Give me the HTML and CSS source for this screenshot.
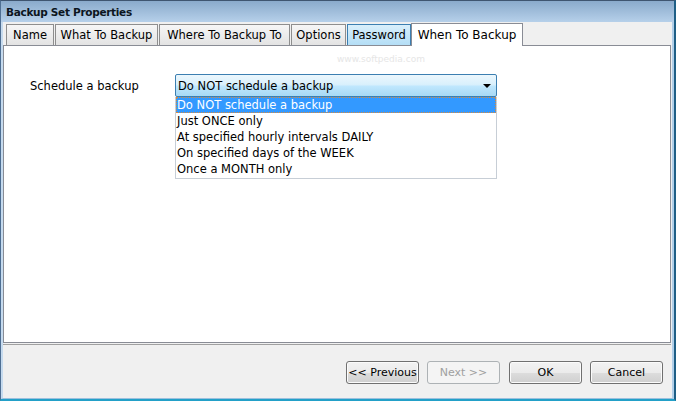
FILE: index.html
```html
<!DOCTYPE html>
<html>
<head>
<meta charset="utf-8">
<link rel="stylesheet" href="styles.css">
</head>
<body>
<div class="window">
  <div class="titlebar">Backup Set Properties</div>
  <div class="frame">
    <div class="tabs">
      <div class="tab t-name">Name</div>
      <div class="tab t-what">What To Backup</div>
      <div class="tab t-where">Where To Backup To</div>
      <div class="tab t-options">Options</div>
      <div class="tab t-pass hover">Password</div>
      <div class="tab t-when active">When To Backup</div>
    </div>
    <div class="panel">
      <div class="watermark">www.softpedia.com</div>
      <div class="row">
        <div class="label">Schedule a backup</div>
        <div class="combo-wrap">
          <div class="combo">
            <span>Do NOT schedule a backup</span>
            <span class="arrow"></span>
          </div>
          <ul class="list">
            <li class="selected">Do NOT schedule a backup</li>
            <li>Just ONCE only</li>
            <li>At specified hourly intervals DAILY</li>
            <li>On specified days of the WEEK</li>
            <li>Once a MONTH only</li>
          </ul>
        </div>
      </div>
    </div>
    <div class="footer">
      <button class="btn">&lt;&lt; Previous</button>
      <button class="btn disabled">Next &gt;&gt;</button>
      <button class="btn ok">OK</button>
      <button class="btn">Cancel</button>
    </div>
  </div>
</div>
</body>
</html>
```

FILE: styles.css
```css
html, body {
  margin: 0;
  padding: 0;
  width: 676px;
  height: 401px;
  overflow: hidden;
  font-family: "DejaVu Sans", sans-serif;
  font-size: 11px;
  color: #000;
}

.window {
  width: 676px;
  height: 401px;
  box-sizing: border-box;
  display: flex;
  flex-direction: column;
  background: #f0f0f0;
  border-left: 1px solid #4f6f93;
  border-right: 2px solid #1f5f86;
  border-bottom: 2px solid #23a0c8;
  border-top: 1px solid #3f5570;
}

.titlebar {
  height: 21px;
  line-height: 22px;
  padding-left: 5px;
  font-weight: bold;
  font-size: 10.5px;
  letter-spacing: -0.3px;
  background: linear-gradient(#8aaacb, #b6d0ea);
  color: #0c1520;
}

.frame {
  flex: 1;
  display: flex;
  flex-direction: column;
  border-left: 2px solid #c6dbef;
  border-right: 2px solid #b2cfe8;
  border-bottom: 1px solid #9cc0de;
  background: #f0f0f0;
}

.tabs {
  display: flex;
  align-items: flex-end;
  height: 23px;
  padding-left: 3px;
  gap: 1px;
}

.tab {
  height: 21px;
  line-height: 21px;
  box-sizing: border-box;
  text-align: center;
  border: 1px solid #8e8e8e;
  border-bottom: none;
  background: linear-gradient(#f6f6f6, #e3e3e3);
  font-size: 11.5px;
  color: #000;
}

.t-name { width: 48px; }
.t-what { width: 103px; }
.t-where { width: 131px; }
.t-options { width: 55px; }
.t-pass { width: 64px; }
.t-when { width: 112px; }

.tab.hover {
  background: linear-gradient(#d9effb, #b4def6);
  border-color: #3c7fb1;
}

.tab.active {
  height: 23px;
  line-height: 22px;
  background: #fff;
  border-color: #898c95;
  margin-left: -1px;
  margin-bottom: -1px;
  position: relative;
  z-index: 1;
  font-size: 12px;
}

.panel {
  flex: 1;
  background: #fff;
  border: 1px solid #898c95;
  margin-right: 1px;
  position: relative;
  box-shadow: 0 1px 0 #f0f0f0, 0 2px 0 #a0a0a0;
  margin-bottom: 3px;
}

.watermark {
  position: absolute;
  left: 333px;
  top: 8px;
  color: #e6e6e6;
  font-size: 9px;
}

.row {
  display: flex;
  padding: 28px 0 0 26px;
}

.label {
  width: 145px;
  padding-top: 5px;
  font-size: 11.5px;
}

.combo-wrap {
  width: 322px;
}

.combo {
  height: 23px;
  box-sizing: border-box;
  border: 1px solid #3c7fb1;
  border-radius: 2px;
  background: linear-gradient(#ecf7fd 0%, #d9f0fc 45%, #bee6fd 55%, #a7d9f5 100%);
  display: flex;
  align-items: center;
  justify-content: space-between;
  padding: 0 5px 0 2px;
  font-size: 11.5px;
}

.arrow {
  width: 0;
  height: 0;
  border-left: 4px solid transparent;
  border-right: 4px solid transparent;
  border-top: 4px solid #000;
  margin-top: 1px;
}

.list {
  list-style: none;
  margin: 0;
  padding: 0 0 1px 0;
  border: 1px solid #c7ced6;
  border-top: none;
  background: #fff;
  font-size: 11.5px;
}

.list li {
  height: 16px;
  line-height: 16px;
  padding-left: 1px;
  box-sizing: border-box;
}

.list li.selected {
  background: #3399ff;
  color: #fff;
  border: 1px dotted #d98a3c;
  line-height: 14px;
  padding-left: 0;
}

.footer {
  height: 52px;
  display: flex;
  justify-content: flex-end;
  align-items: flex-start;
  padding: 15px 9px 0 0;
  box-sizing: border-box;
}

.btn {
  width: 73px;
  height: 23px;
  font-family: "DejaVu Sans", sans-serif;
  font-size: 11px;
  border: 1px solid #707070;
  border-radius: 3px;
  background: linear-gradient(#f2f2f2 0%, #ebebeb 50%, #dddddd 51%, #cfcfcf 100%);
  color: #000;
  padding: 0;
  margin-left: 8px;
  box-shadow: inset 0 0 0 1px #fbfbfb;
}

.btn.disabled {
  border-color: #adb2b5;
  background: #f4f4f4;
  color: #a0a0a0;
  box-shadow: none;
}

.btn.ok {
  margin-left: 9px;
}
```
